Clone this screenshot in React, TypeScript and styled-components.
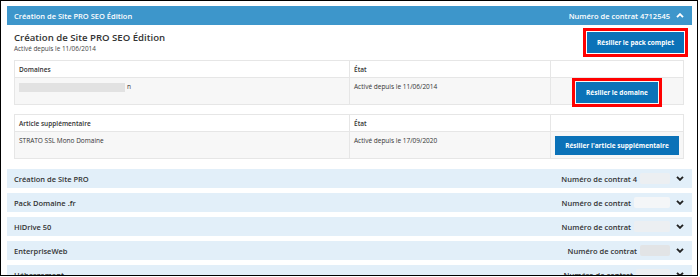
import styled, { createGlobalStyle } from 'styled-components';

const GlobalStyle = createGlobalStyle`
  * {
    box-sizing: border-box;
  }

  body {
    margin: 0;
    background: #fff;
    font-family: "Open Sans", "Liberation Sans", sans-serif;
    color: #333;
  }
`;

const Frame = styled.div`
  width: 698px;
  height: 276px;
  border: 1px solid #000;
  padding: 5px 5px 0 6px;
  overflow: hidden;
  display: flex;
  flex-direction: column;
  gap: 5px;
`;

const PanelHeader = styled.div<{ $open?: boolean }>`
  flex: none;
  height: 19px;
  padding: 0 8px 0 7px;
  display: flex;
  align-items: center;
  justify-content: space-between;
  background: ${(p) => (p.$open ? '#3d96cb' : '#e2eff9')};
  color: ${(p) => (p.$open ? '#fff' : '#333')};
  font-size: 7.5px;
  font-weight: 600;
`;

const Contract = styled.div`
  display: flex;
  align-items: center;
  gap: 6px;
`;

const Number = styled.span`
  display: inline-flex;
  align-items: center;
`;

const Redacted = styled.span<{ $width: number; $tone: string }>`
  display: inline-block;
  width: ${(p) => p.$width}px;
  height: 11px;
  margin-left: 3px;
  background: ${(p) => p.$tone};
  border-radius: 2px;
  filter: blur(0.6px);
`;

const PanelBody = styled.div`
  flex: none;
  padding: 2px 8px 5px 7px;
  display: flex;
  flex-direction: column;
  gap: 9px;
`;

const TopRow = styled.div`
  display: flex;
  justify-content: space-between;
  align-items: flex-start;
  margin-bottom: -2px;
`;

const Title = styled.div`
  font-size: 9.6px;
  font-weight: 600;
  line-height: 12px;
  color: #333;
`;

const Since = styled.div`
  font-size: 6.4px;
  line-height: 9px;
  color: #444;
`;

const Button = styled.button<{ $height?: number; $marked?: boolean }>`
  height: ${(p) => p.$height ?? 21}px;
  padding: 0 10px;
  border: none;
  background: #0b72b8;
  color: #fff;
  font-family: inherit;
  font-size: 6.5px;
  font-weight: 700;
  white-space: nowrap;
  outline: ${(p) => (p.$marked ? '3px solid #f00' : 'none')};
  outline-offset: 1px;
`;

const Table = styled.div`
  display: grid;
  grid-template-columns: 335px 201px 1fr;
  border: 1px solid #e6e6e6;
`;

const HeadCell = styled.div<{ $last?: boolean }>`
  height: 17px;
  padding: 0 4px;
  display: flex;
  align-items: center;
  background: #fff;
  border-bottom: 1px solid #e6e6e6;
  border-right: ${(p) => (p.$last ? 'none' : '1px solid #e6e6e6')};
  font-size: 6.5px;
  font-weight: 600;
`;

const Cell = styled.div<{ $last?: boolean; $center?: boolean }>`
  height: 26px;
  padding: 4px 4px 0;
  display: flex;
  align-items: flex-start;
  justify-content: ${(p) => (p.$center ? 'center' : 'flex-start')};
  background: #f7f7f7;
  border-right: ${(p) => (p.$last ? 'none' : '1px solid #e6e6e6')};
  font-size: 6.5px;
  line-height: 9px;
`;

const BlurredDomain = styled.span`
  display: inline-block;
  width: 106px;
  height: 9px;
  margin: 1px 2px 0 0;
  background: #e2e2e2;
`;

function Chevron({ up, color }: { up?: boolean; color: string }) {
  return (
    <svg width="8" height="5" viewBox="0 0 8 5">
      <polyline
        points={up ? '1,4.2 4,1.2 7,4.2' : '1,0.8 4,3.8 7,0.8'}
        fill="none"
        stroke={color}
        strokeWidth="1.9"
      />
    </svg>
  );
}

const others = [
  { name: 'Création de Site PRO', lead: '4', width: 30, tone: '#eceff2' },
  { name: 'Pack Domaine .fr', lead: '', width: 36, tone: '#f4f6f8' },
  { name: 'HiDrive 50', lead: '', width: 36, tone: '#eceff2' },
  { name: 'EnterpriseWeb', lead: '', width: 30, tone: '#e2e4e6' },
  { name: 'Hébergement', lead: '', width: 34, tone: '#eceff2' },
];

export default function App() {
  return (
    <>
      <GlobalStyle />
      <Frame>
        <PanelHeader $open>
          <span>Création de Site PRO SEO Édition</span>
          <Contract>
            <span>Numéro de contrat 4712545</span>
            <Chevron up color="#fff" />
          </Contract>
        </PanelHeader>
        <PanelBody>
          <TopRow>
            <div>
              <Title>Création de Site PRO SEO Édition</Title>
              <Since>Activé depuis le 11/06/2014</Since>
            </div>
            <Button $marked>Résilier le pack complet</Button>
          </TopRow>
          <Table>
            <HeadCell>Domaines</HeadCell>
            <HeadCell>État</HeadCell>
            <HeadCell $last />
            <Cell>
              <BlurredDomain />n
            </Cell>
            <Cell>Activé depuis le 11/06/2014</Cell>
            <Cell $last $center>
              <Button $marked>Résilier le domaine</Button>
            </Cell>
          </Table>
          <Table>
            <HeadCell>Article supplémentaire</HeadCell>
            <HeadCell>État</HeadCell>
            <HeadCell $last />
            <Cell>STRATO SSL Mono Domaine</Cell>
            <Cell>Activé depuis le 17/09/2020</Cell>
            <Cell $last $center>
              <Button $height={19}>Résilier l'article supplémentaire</Button>
            </Cell>
          </Table>
        </PanelBody>
        {others.map((item) => (
          <PanelHeader key={item.name}>
            <span>{item.name}</span>
            <Contract>
              <Number>
                Numéro de contrat {item.lead}
                <Redacted $width={item.width} $tone={item.tone} />
              </Number>
              <Chevron color="#222" />
            </Contract>
          </PanelHeader>
        ))}
      </Frame>
    </>
  );
}
